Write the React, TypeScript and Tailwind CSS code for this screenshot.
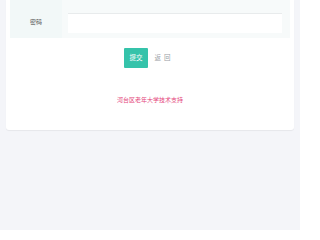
export default function App() {
  return (
    <div className="min-h-[230px] w-[300px] bg-[#f4f5f9] font-['Noto_Sans_CJK_SC',sans-serif]">
      <div className="mx-[6px] w-[288px] rounded-b-[3px] bg-white px-[4px] pb-[26px] shadow-[0_1px_1px_rgba(0,0,0,0.06)]">
        {/* form row */}
        <div className="flex h-[38px] bg-[#f7fafa]">
          <div className="flex w-[52px] items-end justify-center bg-[#f2f8f8] pb-[12px] text-[6px] text-[#555]">
            密码
          </div>
          <div className="flex flex-1 items-start pl-[6px] pr-[8px] pt-[13px]">
            <div className="h-[20px] w-full border-t border-[#e8ebec] bg-white" />
          </div>
        </div>

        {/* buttons */}
        <div className="mt-[10px] flex items-center justify-center gap-[4px]">
          <button className="flex h-[20px] w-[24px] items-center justify-center rounded-[1px] bg-[#35c3aa] text-[6.5px] text-white">
            提交
          </button>
          <button className="flex h-[20px] w-[24px] items-center justify-center text-[6.5px] tracking-[3px] text-[#9aa0a6]">
            返回
          </button>
        </div>

        {/* footer */}
        <div className="mt-[28px] text-center text-[6px] leading-[8px] text-[#e4457b]">
          河台区老年大学技术支持
        </div>
      </div>
    </div>
  );
}
